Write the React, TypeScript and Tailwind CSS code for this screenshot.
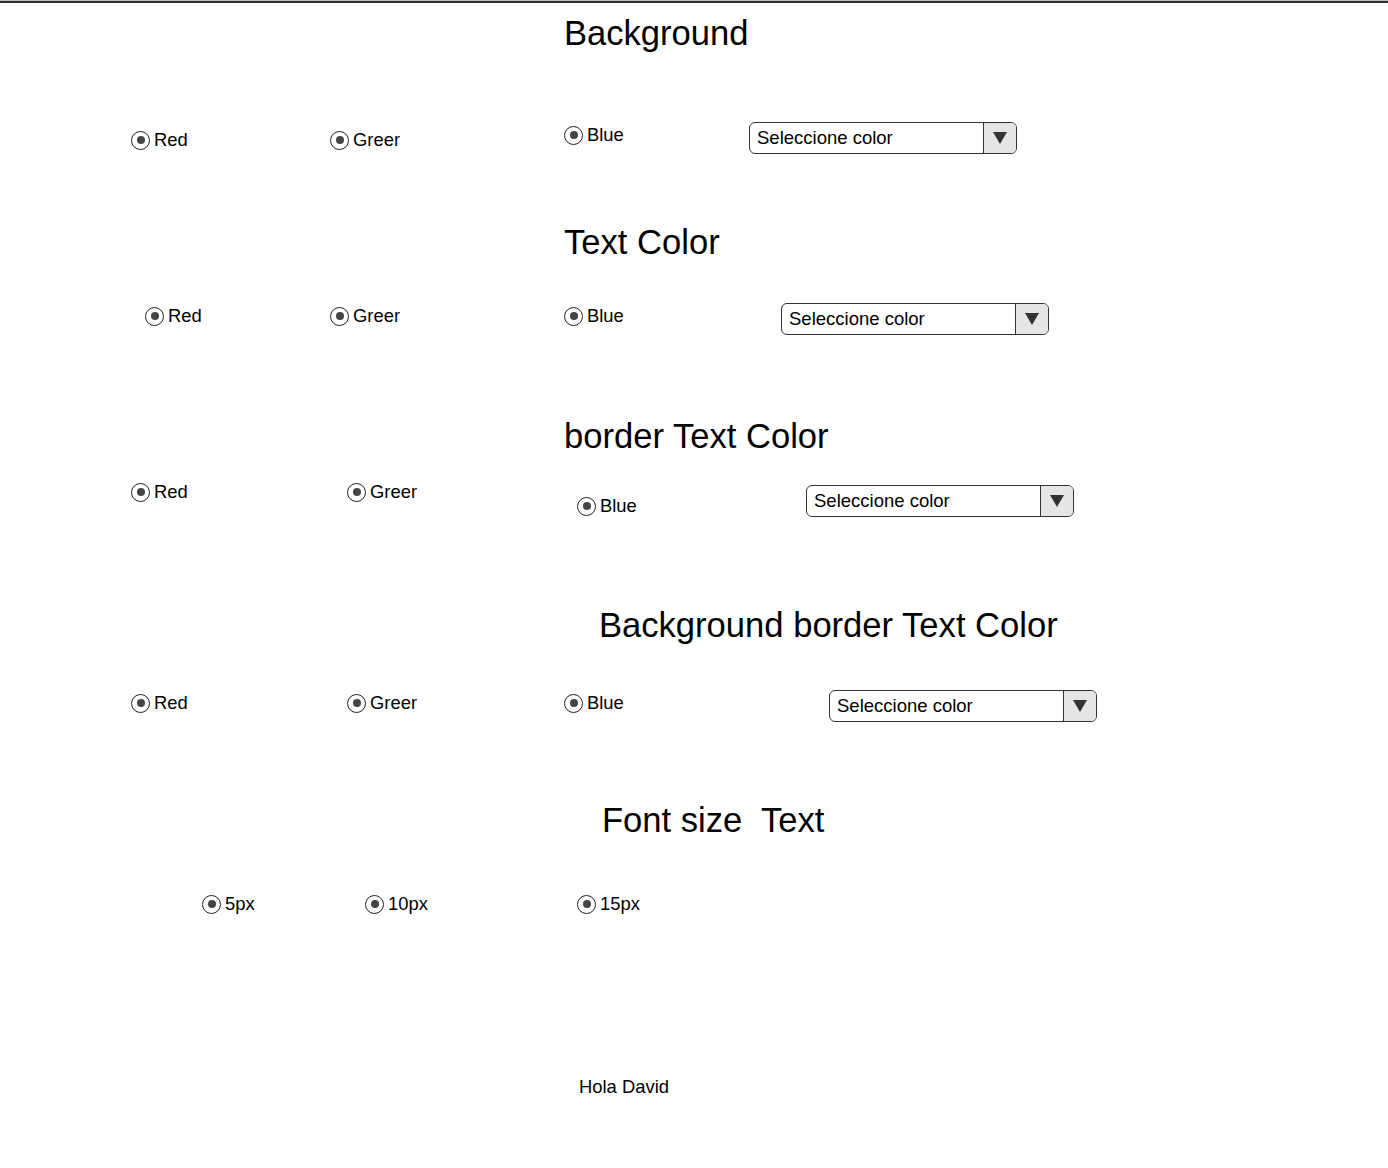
import React from 'react';

const font = { fontFamily: '"Liberation Sans", Arial, sans-serif' };

const Radio: React.FC<{ label: string; className?: string }> = ({ label, className = '' }) => (
  <div className={`flex items-center gap-[4px] h-[20px] text-[18.4px] leading-[22px] text-black ${className}`}>
    <span className="w-[19px] h-[19px] rounded-full border-[1.5px] border-[#222] flex items-center justify-center shrink-0">
      <span className="w-[8px] h-[8px] rounded-full bg-[#444]" />
    </span>
    <span>{label}</span>
  </div>
);

const Select: React.FC<{ className?: string }> = ({ className = '' }) => (
  <div className={`flex w-[268px] h-[32px] border border-[#333] rounded-[6px] overflow-hidden bg-white shrink-0 ${className}`}>
    <div className="flex-1 flex items-center pl-[7px] text-[18.5px] text-black">Seleccione color</div>
    <div className="w-[33px] border-l border-[#333] bg-[#e6e6e6] flex items-center justify-center">
      <svg width="14" height="12" viewBox="0 0 14 12">
        <path d="M0 0 L14 0 L7 12 Z" fill="#333" />
      </svg>
    </div>
  </div>
);

const Heading: React.FC<{ children: React.ReactNode; className?: string }> = ({ children, className = '' }) => (
  <h2 className={`text-[34.6px] leading-[40px] text-black whitespace-pre ${className}`}>{children}</h2>
);

export default function App() {
  return (
    <div className="min-h-[1168px] bg-white" style={font}>
      <div className="h-[1px] bg-[#bdbdbd]" />
      <div className="h-[2px] bg-[#2b2b2b]" />

      {/* Background */}
      <Heading className="mt-[10px] pl-[564px]">Background</Heading>
      <div className="mt-[69px] flex items-start pl-[131px]">
        <div className="w-[199px] mt-[8px]"><Radio label="Red" /></div>
        <div className="w-[234px] mt-[8px]"><Radio label="Greer" /></div>
        <div className="w-[185px] mt-[3px]"><Radio label="Blue" /></div>
        <Select />
      </div>

      {/* Text Color */}
      <Heading className="mt-[68px] pl-[564px]">Text Color</Heading>
      <div className="mt-[41px] flex items-start pl-[145px]">
        <div className="w-[185px] mt-[3px]"><Radio label="Red" /></div>
        <div className="w-[234px] mt-[3px]"><Radio label="Greer" /></div>
        <div className="w-[217px] mt-[3px]"><Radio label="Blue" /></div>
        <Select />
      </div>

      {/* border Text Color */}
      <Heading className="mt-[81px] pl-[564px]">border Text Color</Heading>
      <div className="mt-[26px] flex items-start pl-[131px]">
        <div className="w-[216px]"><Radio label="Red" /></div>
        <div className="w-[230px]"><Radio label="Greer" /></div>
        <div className="w-[229px] mt-[14px]"><Radio label="Blue" /></div>
        <Select className="mt-[3px]" />
      </div>

      {/* Background border Text Color */}
      <Heading className="mt-[88px] pl-[599px]">Background border Text Color</Heading>
      <div className="mt-[45px] flex items-start pl-[131px]">
        <div className="w-[216px] mt-[3px]"><Radio label="Red" /></div>
        <div className="w-[217px] mt-[3px]"><Radio label="Greer" /></div>
        <div className="w-[265px] mt-[3px]"><Radio label="Blue" /></div>
        <Select />
      </div>

      {/* Font size */}
      <Heading className="mt-[78px] pl-[602px]">{'Font size  Text'}</Heading>
      <div className="mt-[54px] flex items-start pl-[202px]">
        <div className="w-[163px]"><Radio label="5px" /></div>
        <div className="w-[212px]"><Radio label="10px" /></div>
        <div><Radio label="15px" /></div>
      </div>

      <p className="mt-[162px] pl-[579px] text-[18.4px] leading-[22px] text-black">Hola David</p>
    </div>
  );
}
